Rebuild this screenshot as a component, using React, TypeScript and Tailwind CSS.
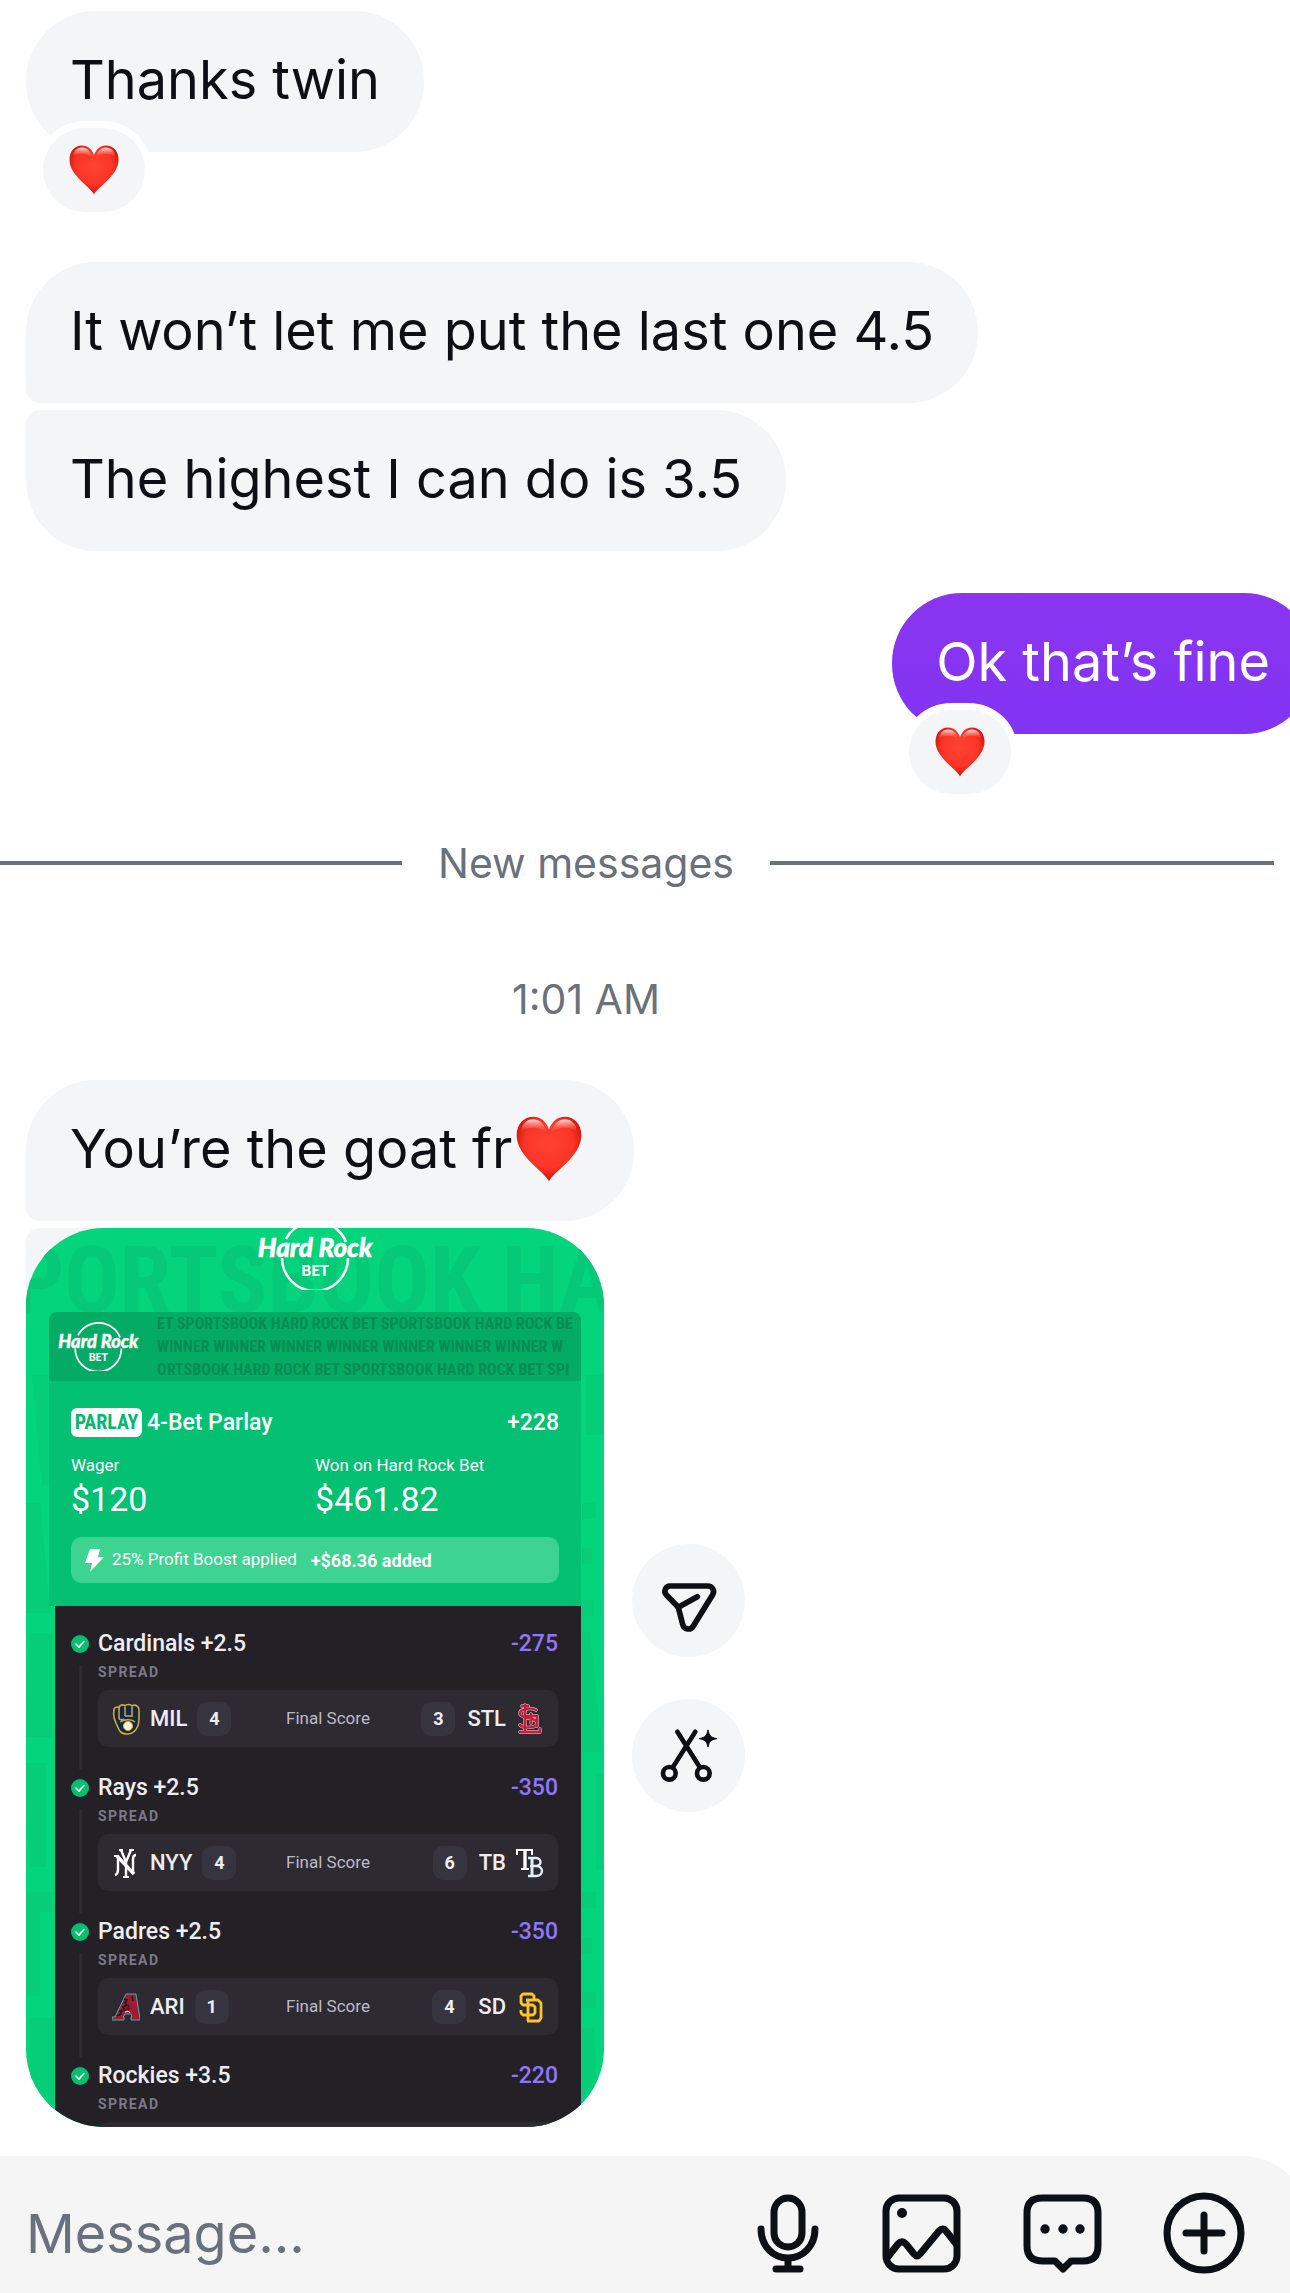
import React from 'react';
import { clsx } from 'clsx';

type Team = { code: string; score: number; logo: React.ReactNode };

type Leg = {
  name: string;
  odds: string;
  away?: Team;
  home?: Team;
};

const Heart: React.FC<{ id: string; className?: string }> = ({ id, className }) => (
  <svg viewBox="0 0 100 100" className={className} role="img" aria-label="Red heart">
    <defs>
      <radialGradient id={`${id}-body`} cx="50%" cy="42%" r="62%">
        <stop offset="0" stopColor="#ff4332" />
        <stop offset="0.6" stopColor="#fb3527" />
        <stop offset="1" stopColor="#c40b02" />
      </radialGradient>
      <linearGradient id={`${id}-shine`} x1="0" y1="0" x2="0" y2="1">
        <stop offset="0" stopColor="#fff" stopOpacity="0.85" />
        <stop offset="1" stopColor="#ff6a5c" stopOpacity="0" />
      </linearGradient>
    </defs>
    <path
      d="M50 99C44 84 1 62 1 29 1 12 12 1 26 1c12 0 20 8 24 19C54 9 62 1 74 1c14 0 25 11 25 28 0 33-43 55-49 70Z"
      fill={`url(#${id}-body)`}
    />
    <path d="M8 25C8 12 16 5 26 5s18 8 20 19c-8-7-30-10-38 1Z" fill={`url(#${id}-shine)`} />
    <path d="M92 25C92 12 84 5 74 5s-18 8-20 19c8-7 30-10 38 1Z" fill={`url(#${id}-shine)`} />
  </svg>
);

const Reaction: React.FC<{ id: string }> = ({ id }) => (
  <span className="absolute -bottom-15 left-[17px] flex h-[84px] w-[102px] items-center justify-center rounded-full bg-[#f3f5f7] ring-[7px] ring-white">
    <Heart id={id} className="h-[50px] w-[50px]" />
  </span>
);

const Bubble: React.FC<{ children: React.ReactNode; className: string }> = ({ children, className }) => (
  <div className={clsx('relative w-fit whitespace-nowrap px-11 pb-[38px] pt-[34px] text-[54px] leading-[69px]', className)}>
    {children}
  </div>
);

const HardRockLogo: React.FC<{ className?: string }> = ({ className }) => (
  <svg viewBox="0 0 120 70" className={className} role="img" aria-label="Hard Rock Bet">
    <g fill="none" stroke="#fff" strokeWidth="2.6">
      <path d="M30 19A33 33 0 0 1 90 22" />
      <path d="M26 38A33 33 0 0 0 92 38" />
    </g>
    <text
      x="59"
      y="37"
      textAnchor="middle"
      fill="#fff"
      stroke="#fff"
      strokeWidth="0.6"
      fontFamily="Lato"
      fontSize="26"
      fontWeight="900"
      fontStyle="italic"
    >
      Hard Rock
    </text>
    <text x="59" y="56" textAnchor="middle" fill="#fff" fontFamily="Lato" fontSize="15" fontWeight="900">
      BET
    </text>
  </svg>
);

const BrewersLogo = () => (
  <svg viewBox="0 0 28 32" className="h-8 w-7" aria-hidden="true">
    <path d="M2 8c-1-3 3-5 5-3 0-3 5-4 6-2 1-2 6-2 7 0 3-2 7 0 7 4v8c0 9-4 16-12 16C8 31 7 27 4 20 2 16 1 12 2 8Z" fill="#12284b" stroke="#d9a62e" strokeWidth="1.6" />
    <path d="M7 6v9c0 2 3 2 5 1M13 4v9M20 4v10M13 13h7M8 19c3-2 11-4 15 0" fill="none" stroke="#d9a62e" strokeWidth="1.5" />
    <circle cx="16" cy="23" r="4.6" fill="#fff3cf" stroke="#d9a62e" />
  </svg>
);

const CardinalsLogo = () => (
  <svg viewBox="0 0 28 32" className="h-8 w-7" aria-hidden="true">
    <g fill="none" strokeLinecap="round" strokeLinejoin="round">
      <path d="M9 2v27M6 3h6M4 29h20v-3M20 7C15 4 3 6 4 11s17 3 17 9-14 5-17 2M10 13h11v10M15 11v9" stroke="#e8d9da" strokeWidth="3.4" />
      <path d="M9 2v27M6 3h6M4 29h20v-3M20 7C15 4 3 6 4 11s17 3 17 9-14 5-17 2M10 13h11v10M15 11v9" stroke="#c41e3a" strokeWidth="2.5" />
    </g>
  </svg>
);

const YankeesLogo = () => (
  <svg viewBox="0 0 28 32" className="h-8 w-7" aria-hidden="true">
    <g fill="none" stroke="#fff">
      <path d="M5 9l17 18" strokeWidth="3.4" />
      <path d="M6 9v14q0 4-3 5M21 27V12q0-4 3-4" strokeWidth="2.4" />
      <path d="M9 3l5 12M19 3l-5 12" strokeWidth="2.4" />
      <path d="M14 14v15" strokeWidth="2.4" />
      <path d="M2 9h5M7 3h4M17 3h5M11 30h6" strokeWidth="1.8" />
    </g>
  </svg>
);

const RaysLogo = () => (
  <svg viewBox="0 0 28 32" className="h-8 w-7" aria-hidden="true">
    <g fill="none" stroke="#fff">
      <path d="M1 8V3h15v5" strokeWidth="2" />
      <path d="M9 3v19" strokeWidth="3.4" />
      <path d="M5 22h8" strokeWidth="2" />
      <path d="M12 11h8c6 0 6 8 0 8 8 0 8 10 0 10h-8M14 19h6" stroke="#dff0f5" strokeWidth="2.4" />
      <path d="M16 11v18" stroke="#dff0f5" strokeWidth="3" />
    </g>
  </svg>
);

const DiamondbacksLogo = () => (
  <svg viewBox="0 0 28 32" className="h-8 w-7" aria-hidden="true">
    <path d="M14 3h10l4 25v1h-9v-3h1l-1-3h-6l-2 3h1v3H0v-3h3Z" fill="#a71930" stroke="#3ec1c9" strokeWidth="0.9" />
    <path d="M17 12l1 7h-4Z" fill="#2d2b31" />
    <path d="M12 8l3 1-2 3 2 2-4 2 2 3-5 1 1 3-4 2M20 5l1 5" fill="none" stroke="#1c1a1e" strokeWidth="1.6" />
    <path d="M13 21c2-1 4-1 5 1" fill="none" stroke="#e3d4ad" strokeWidth="1.2" />
  </svg>
);

const PadresLogo = () => (
  <svg viewBox="0 0 28 32" className="h-8 w-7" aria-hidden="true">
    <g fill="none" stroke="#ffc425" strokeWidth="2.8" strokeLinejoin="round">
      <path d="M18 9V5l-2-2H7L5 5v7l2 2h10l2 2v6l-2 2H7l-2-2v-3" />
      <path d="M10 9h12l3 3v15l-2 3H11M12 9v21" />
    </g>
  </svg>
);

const LEGS: Leg[] = [
  {
    name: 'Cardinals +2.5',
    odds: '-275',
    away: { code: 'MIL', score: 4, logo: <BrewersLogo /> },
    home: { code: 'STL', score: 3, logo: <CardinalsLogo /> },
  },
  {
    name: 'Rays +2.5',
    odds: '-350',
    away: { code: 'NYY', score: 4, logo: <YankeesLogo /> },
    home: { code: 'TB', score: 6, logo: <RaysLogo /> },
  },
  {
    name: 'Padres +2.5',
    odds: '-350',
    away: { code: 'ARI', score: 1, logo: <DiamondbacksLogo /> },
    home: { code: 'SD', score: 4, logo: <PadresLogo /> },
  },
  { name: 'Rockies +3.5', odds: '-220' },
];

const Score: React.FC<{ value: number }> = ({ value }) => (
  <span className="flex h-[34px] w-[34px] items-center justify-center rounded-[10px] bg-[#36353f] text-[18px] font-bold">
    {value}
  </span>
);

const LegRow: React.FC<{ leg: Leg }> = ({ leg }) => (
  <li className="flex h-36 gap-[9px]">
    {/* Check mark and connector */}
    <div className="flex flex-col items-center">
      <svg viewBox="0 0 18 18" className="mt-[5px] h-[18px] w-[18px] shrink-0" aria-hidden="true">
        <circle cx="9" cy="9" r="9" fill="#04bf71" />
        <path d="M5 9.200l3 2.800 5-5.500" fill="none" stroke="#fff" strokeWidth="1.600" strokeLinecap="round" />
      </svg>
      {leg.away && <div className="mt-3 h-[104px] w-[3px] shrink-0 bg-[#2b2a2f]" />}
    </div>
    <div className="flex-1">
      <div className="flex justify-between text-[23px] font-medium leading-7">
        <span className="text-[#efedf3]">{leg.name}</span>
        <span className="text-[#8f77f8]">{leg.odds}</span>
      </div>
      <div className="mt-1 text-sm font-bold leading-5 tracking-widest text-[#7b7888]">SPREAD</div>
      <div className="mt-2 grid h-[57px] grid-cols-[1fr_auto_1fr] items-center rounded-[10px] bg-[#2d2b31] px-[14px] text-[22px] font-medium text-[#efedf3]">
        {leg.away && leg.home && (
          <>
            <div className="flex items-center">
              {leg.away.logo}
              <span className="mx-[10px]">{leg.away.code}</span>
              <Score value={leg.away.score} />
            </div>
            <span className="text-[17px] font-normal text-[#bdbac6]">Final Score</span>
            <div className="flex items-center justify-end">
              <Score value={leg.home.score} />
              <span className="ml-3 mr-[10px]">{leg.home.code}</span>
              {leg.home.logo}
            </div>
          </>
        )}
      </div>
    </div>
  </li>
);

const BetSlip = () => (
  <div className="relative h-[899px] w-[578px] overflow-hidden rounded-[78px] bg-[#04d47b] font-['Roboto',sans-serif] text-white">
    {/* Lettering behind the slip */}
    <svg viewBox="0 0 578 899" className="absolute inset-0 h-full w-full" aria-hidden="true">
      <text x="-14" y="84" fill="#05c976" fontFamily="Roboto Condensed, Roboto, sans-serif" fontSize="92" fontWeight="700">
        PORTSBOOK HA
      </text>
      <g fill="#05cd78">
        <path d="M6 147h22v110H16ZM0 275h14l10 110H0ZM4 405h22v104H0ZM0 535h20v104H4ZM0 664h26v20H14v84H0ZM4 790h24v109H4Z" />
        <path d="M560 147h18v60h-18ZM556 275h14v16h-14ZM556 320h10v16h-10ZM556 372h12v16h-12ZM556 404h8l12 120h-20ZM570 545h8v96h-8ZM556 664h14v16h-14ZM556 710h10v16h-10ZM556 764h14v16h-14ZM556 800h12l6 99h-18Z" />
      </g>
    </svg>

    <div className="relative flex flex-col">
      <HardRockLogo className="-mt-2 ml-[230px] h-[70px] w-[120px]" />

      <div className="mx-[23px] mt-[22px] rounded-t-lg bg-[#04c072]">
        {/* Banner */}
        <div className="flex h-[69px] items-center overflow-hidden rounded-t-lg bg-[#04ab65]">
          <HardRockLogo className="ml-2 h-[49px] w-[84px] shrink-0" />
          <div className="ml-4 min-w-0 flex-1 overflow-hidden whitespace-nowrap font-['Roboto_Condensed','Roboto',sans-serif] text-base font-bold leading-[23px] text-[#038d52]">
            <div>ET SPORTSBOOK HARD ROCK BET SPORTSBOOK HARD ROCK BE</div>
            <div>WINNER WINNER WINNER WINNER WINNER WINNER WINNER W</div>
            <div>ORTSBOOK HARD ROCK BET SPORTSBOOK HARD ROCK BET SPI</div>
          </div>
        </div>

        {/* Summary */}
        <div className="px-[22px] pb-[23px] pt-[27px]">
          <div className="flex items-center text-[23px] font-medium leading-[29px]">
            <span className="flex h-[29px] w-[71px] items-center justify-center rounded-md bg-white font-['Roboto_Condensed','Roboto',sans-serif] text-[20px] font-bold text-[#04b86d]">
              PARLAY
            </span>
            <span className="ml-[5px] flex-1">4-Bet Parlay</span>
            <span>+228</span>
          </div>
          <div className="mt-[18px] grid grid-cols-2">
            <div>
              <div className="text-[17px] leading-5">Wager</div>
              <div className="mt-1 text-[34px] leading-10">$120</div>
            </div>
            <div>
              <div className="text-[17px] leading-5">Won on Hard Rock Bet</div>
              <div className="mt-1 text-[34px] leading-10">$461.82</div>
            </div>
          </div>
          <div className="mt-[18px] flex h-[46px] items-center rounded-[11px] bg-[#3dd492] pl-[14px] text-[17px]">
            <svg viewBox="0 0 19 23" className="h-[23px] w-[19px]" aria-hidden="true">
              <path d="M5 0h10l-2 8h6L5 23l2-9H0Z" fill="#fff" />
            </svg>
            <span className="ml-2">25% Profit Boost applied</span>
            <span className="ml-[14px] text-[18px] font-bold">+$68.36 added</span>
          </div>
        </div>
      </div>

      {/* Legs */}
      <ul className="ml-[29px] mr-[23px] bg-[#242126] pl-4 pr-[23px] pt-6">
        {LEGS.map((leg) => (
          <LegRow key={leg.name} leg={leg} />
        ))}
      </ul>
    </div>
  </div>
);

const App: React.FC = () => {
  const [message, setMessage] = React.useState('');

  return (
    <div className="flex flex-col overflow-hidden bg-white font-['Inter',sans-serif]">
      <main className="flex flex-col pl-[26px] pt-[11px]">
        <Bubble className="rounded-[70px] bg-[#f3f5f7] text-[#0c1014]">
          Thanks twin
          <Reaction id="heart-thanks" />
        </Bubble>

        <div className="mt-[110px] flex flex-col gap-[7px]">
          <Bubble className="rounded-[70px] rounded-bl-[14px] bg-[#f3f5f7] text-[#0c1014]">
            It won’t let me put the last one 4.5
          </Bubble>
          <Bubble className="rounded-[70px] rounded-tl-[14px] bg-[#f3f5f7] text-[#0c1014]">
            The highest I can do is 3.5
          </Bubble>
        </div>

        <Bubble className="-mr-6 mt-[42px] self-end rounded-[70px] bg-linear-to-b from-[#8a35ef] to-[#8134f3] text-white">
          Ok that’s fine
          <Reaction id="heart-fine" />
        </Bubble>

        {/* Separator and time */}
        <div className="-ml-32 mr-4 mt-[105px] text-[41px] leading-12 text-[#6a717c]">
          <div className="flex items-center gap-9">
            <div className="h-1 flex-1 bg-[#6a717c]" />
            <span>New messages</span>
            <div className="h-1 flex-1 bg-[#6a717c]" />
          </div>
          <div className="mt-22 text-center">1:01 AM</div>
        </div>

        <Bubble className="mt-[57px] flex items-center rounded-[70px] rounded-bl-[14px] bg-[#f3f5f7] text-[#0c1014]">
          You’re the goat fr
          <Heart id="heart-goat" className="ml-1 mr-2 h-[66px] w-[66px]" />
        </Bubble>

        <div className="mt-[7px] flex items-center gap-7">
          <div className="rounded-tl-[14px] bg-linear-to-br from-[#f3f5f7] from-20% to-white to-20%">
            <BetSlip />
          </div>
          {/* Media actions */}
          <div className="flex flex-col gap-[42px]">
            <button type="button" aria-label="Forward" className="h-[113px] w-[113px] rounded-full bg-[#f3f5f7]">
              <svg viewBox="0 0 339 339" fill="none" stroke="#0c1014" strokeWidth="17" strokeLinecap="round" strokeLinejoin="round">
                <path d="M114 126H227c14 0 22 14 15 26L184 246c-8 14-28 11-32-5L139 190 104 154c-11-11-3-28 10-28Z" />
                <path d="M139 190l57-32" />
              </svg>
            </button>
            <button type="button" aria-label="Cut out" className="h-[113px] w-[113px] rounded-full bg-[#f3f5f7]">
              <svg viewBox="0 0 339 339" fill="none" stroke="#0c1014" strokeWidth="14" strokeLinecap="round">
                <circle cx="112" cy="223" r="19" />
                <circle cx="214" cy="223" r="19" />
                <path d="M136 98l67 106M190 98l-67 106" />
                <path d="M228 94c4 17 8 21 26 25-18 4-22 8-26 25-4-17-8-21-26-25 18-4 22-8 26-25Z" fill="#0c1014" strokeWidth="3" strokeLinejoin="round" />
              </svg>
            </button>
          </div>
        </div>
      </main>

      {/* Composer */}
      <footer className="-mr-5 mt-[29px] flex items-center rounded-tr-[68px] bg-[#f5f5f5] pb-[18px] pl-[26px] pr-[64px] pt-[35px]">
        <input
          value={message}
          onChange={(e) => setMessage(e.target.value)}
          aria-label="Message"
          placeholder="Message..."
          className="h-[84px] min-w-0 flex-1 bg-transparent text-[54px] text-[#0c1014] outline-none placeholder:text-[#6a717c]"
        />
        <div className="flex gap-[57px]">
          <button type="button" aria-label="Voice message" className="h-[84px] w-[84px]">
            <svg viewBox="0 0 84 84" fill="none" stroke="#0c1014" strokeWidth="7" strokeLinecap="round">
              <rect x="35" y="7" width="28" height="49" rx="14" />
              <path d="M22 38c0 17 12 29 27 29s27-12 27-29M49 68v9" />
              <path d="M37 78h24" />
            </svg>
          </button>
          <button type="button" aria-label="Photo" className="h-[84px] w-[84px]">
            <svg viewBox="0 0 84 84" fill="none" stroke="#0c1014" strokeWidth="7" strokeLinejoin="round">
              <rect x="6" y="7" width="71" height="71" rx="13" />
              <path d="M7 67l11-14q4-4 8 0l8 10q3 4 6 0l19-23q4-4 7 0l11 14" />
              <circle cx="22" cy="22" r="5" fill="#0c1014" stroke="none" />
            </svg>
          </button>
          <button type="button" aria-label="Quick replies" className="h-[84px] w-[84px]">
            <svg viewBox="0 0 84 84" fill="none" stroke="#0c1014" strokeWidth="7" strokeLinejoin="round">
              <path d="M21 7h41q15 0 15 15v33q0 15-15 15H50l-8 8-8-8H22Q6 70 6 55V22Q6 7 21 7Z" />
              <g fill="#0c1014" stroke="none">
                <circle cx="24" cy="38" r="4.700" />
                <circle cx="42" cy="38" r="4.700" />
                <circle cx="59" cy="38" r="4.700" />
              </g>
            </svg>
          </button>
          <button type="button" aria-label="More" className="h-[84px] w-[84px]">
            <svg viewBox="0 0 84 84" fill="none" stroke="#0c1014" strokeWidth="7" strokeLinecap="round">
              <circle cx="42" cy="42" r="37" />
              <path d="M42 24v36M24 42h36" />
            </svg>
          </button>
        </div>
      </footer>
    </div>
  );
};

export default App;
